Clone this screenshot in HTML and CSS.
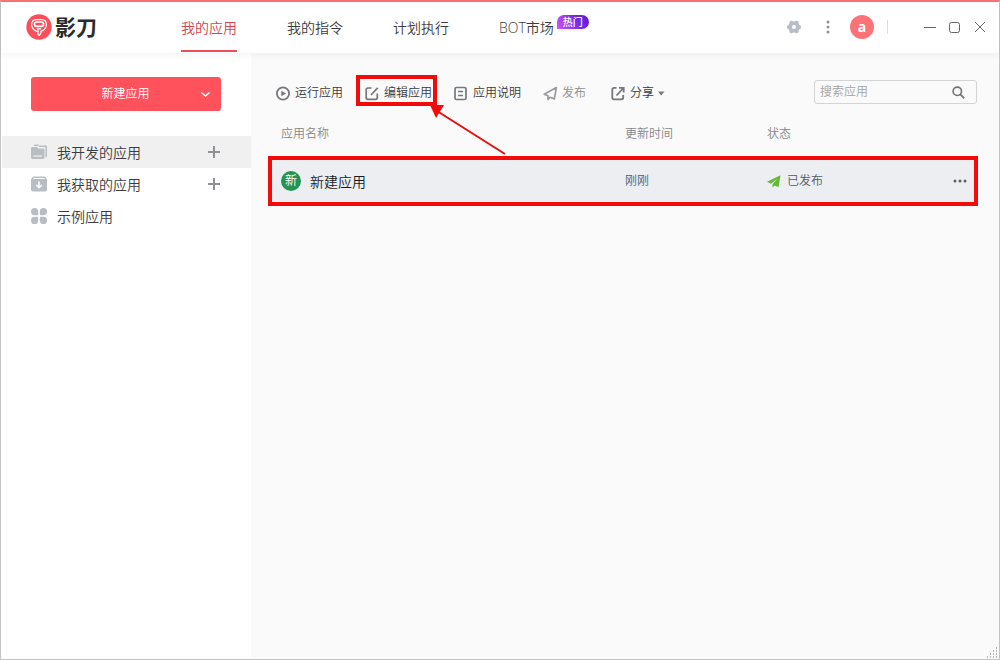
FILE: index.html
```html
<!DOCTYPE html>
<html lang="zh-CN">
<head>
<meta charset="utf-8">
<meta name="viewport" content="width=device-width, initial-scale=1">
<title>影刀</title>
<link rel="stylesheet" href="styles.css">
</head>
<body>
<div class="window">
  <header class="header">
    <div class="brand">
      <svg class="brand-logo" viewBox="0 0 26 26" aria-hidden="true">
        <circle cx="13" cy="13" r="12.7" fill="#fc4f5b"/>
        <g fill="none" stroke="#fff" stroke-linejoin="round" stroke-linecap="round">
          <path stroke-width="1.200" d="M10.800 17.400C8 16.200 5.800 13.800 5.600 10.600 5.500 7.300 7.500 5.700 10.400 5.600h5.200c2.900.1 4.900 1.700 4.800 5-.2 3.200-2.400 5.600-5.200 6.800"/>
          <rect stroke-width="1.700" x="8.500" y="8" width="9" height="4.400" rx="2.100"/>
          <path stroke-width="1.300" d="M11.300 14.800h3.400M12 15.500v4.700l1.200 1.300 1.900-2.800v-1.500"/>
        </g>
      </svg>
      <span class="brand-name">影刀</span>
    </div>
    <nav class="nav">
      <a class="nav-link active" href="#apps">我的应用</a>
      <a class="nav-link" href="#commands">我的指令</a>
      <a class="nav-link" href="#schedule">计划执行</a>
      <a class="nav-link" href="#market">BOT市场<span class="hot">热门</span></a>
    </nav>
    <div class="tools">
      <button class="icon-button" aria-label="设置">
        <svg width="14" height="14" viewBox="0 0 14 14"><path fill="#b9bdc5" fill-rule="evenodd" d="M4.300.6Q7 2.600 9.700.6L11.600 1.700Q11.200 4.700 14 5.800V8.200Q11.200 9.300 11.600 12.300L9.700 13.400Q7 11.400 4.300 13.400L2.400 12.300Q2.800 9.300 0 8.200V5.800Q2.800 4.700 2.400 1.700ZM7 5a2 2 0 1 0 0 4 2 2 0 0 0 0-4z"/></svg>
      </button>
      <button class="icon-button menu" aria-label="更多">
        <svg width="4" height="14" viewBox="0 0 4 14" fill="#8e9197"><circle cx="2" cy="2" r="1.500"/><circle cx="2" cy="7" r="1.500"/><circle cx="2" cy="12" r="1.500"/></svg>
      </button>
      <button class="avatar" aria-label="账号">a</button>
      <span class="divider"></span>
      <button class="icon-button" aria-label="最小化">
        <svg width="12" height="12" viewBox="0 0 12 12"><path d="M0 6.500h12" stroke="#666"/></svg>
      </button>
      <button class="icon-button" aria-label="最大化">
        <svg width="12" height="12" viewBox="0 0 12 12"><rect x=".5" y="1.500" width="10" height="10" rx="2" fill="none" stroke="#666"/></svg>
      </button>
      <button class="icon-button" aria-label="关闭">
        <svg width="12" height="12" viewBox="0 0 12 12"><path d="M1 1l10 10M11 1L1 11" stroke="#666"/></svg>
      </button>
    </div>
  </header>

  <div class="body">
    <aside class="sidebar">
      <button class="create"><span class="create-label">新建应用</span>
        <svg width="11" height="7" viewBox="0 0 11 7"><path d="M1.500 1.500l4 3.600 4-3.600" fill="none" stroke="#fff" stroke-width="1.500"/></svg>
      </button>
      <ul class="folders">
        <li class="folder selected">
          <a class="folder-link" href="#developed">
            <svg width="16" height="16" viewBox="0 0 16 16" fill="#b9bdc4"><path d="M3 2V1.600Q3 .6 4 .6h3l1.300 1H15q1 0 1 1V12q0 1.500-1.500 1.500V4.200q0-1.200-1.200-1.200H8.500L7.500 2z"/><path fill-rule="evenodd" d="M1.500 3H6l1.500 1.400h4.800q1.200 0 1.200 1.200v8q0 1.400-1.400 1.400H1.400Q0 15 0 13.600V4.500Q0 3 1.500 3zM2.500 11.500v1.200H11v-1.200z"/></svg>
            <span class="folder-name">我开发的应用</span></a>
          <button class="add" aria-label="在我开发的应用中新建"></button>
        </li>
        <li class="folder">
          <a class="folder-link" href="#acquired">
            <svg width="16" height="16" viewBox="0 0 16 16"><path fill="#b9bdc4" fill-rule="evenodd" d="M3 .5h10q1 0 1.600.8L16 3.500v10q0 2-2 2H2q-2 0-2-2v-10l1.400-2.200Q2 .5 3 .5zM2 3h12l-.8-1H2.800z"/><path d="M8 5.500v6M5.300 9L8 11.700 10.700 9" fill="none" stroke="#fff" stroke-width="1.600"/></svg>
            <span class="folder-name">我获取的应用</span></a>
          <button class="add" aria-label="在我获取的应用中新建"></button>
        </li>
        <li class="folder">
          <a class="folder-link" href="#examples">
            <svg width="16" height="16" viewBox="0 0 16 16" fill="#b9bdc4"><path d="M3.600 0A3.600 3.600 0 0 1 7.200 3.600V6q0 1.200-1.200 1.200H3.600A3.600 3.600 0 0 1 3.600 0zM12.400 0a3.600 3.600 0 0 1 0 7.200H10Q8.800 7.200 8.800 6V3.600A3.600 3.600 0 0 1 12.400 0zM3.600 8.800H6q1.200 0 1.200 1.200v2.400A3.600 3.600 0 1 1 3.600 8.800zM10 8.800h2.400a3.600 3.600 0 1 1-3.600 3.600V10q0-1.200 1.200-1.200z"/></svg>
            <span class="folder-name">示例应用</span></a>
        </li>
      </ul>
    </aside>

    <main class="main">
      <div class="toolbar">
        <button class="action">
          <svg width="15" height="15" viewBox="0 0 15 15"><circle cx="7" cy="7.500" r="6.100" fill="none" stroke="#75777b" stroke-width="1.800"/><path d="M5.400 4.700v5.600l4.600-2.800z" fill="#75777b"/></svg>
          运行应用</button>
        <button class="action marked">
          <svg width="15" height="15" viewBox="0 0 15 15" fill="none" stroke="#75777b" stroke-width="1.700"><path d="M6.500 2H3Q1.200 2 1.200 3.800v7.700q0 1.800 1.800 1.800h7.500q1.800 0 1.800-1.800V7.500"/><path d="M6 9l6.700-7.200"/></svg>
          编辑应用
          <svg class="arrow" width="80" height="54" viewBox="0 0 80 54" aria-hidden="true"><path d="M8 6l68 43" stroke="#e80d0d" stroke-width="2"/><path d="M1 0L15 0L7 13z" fill="#f30b0b"/></svg>
        </button>
        <button class="action">
          <svg width="15" height="15" viewBox="0 0 15 15" fill="none" stroke="#75777b"><rect x="1" y="1.500" width="11" height="12" rx="1.500" stroke-width="1.700"/><path d="M4 5.500h5M4 9.500h5" stroke-width="1.500"/></svg>
          应用说明</button>
        <button class="action muted">
          <svg width="15" height="15" viewBox="0 0 15 15" fill="none" stroke="#999b9f" stroke-width="1.700" stroke-linejoin="round"><path d="M13.400 1.500L1.200 8.200l3.800 1.600v3.700l2-2.200 4.300 1.600z"/></svg>
          发布</button>
        <button class="action share">
          <svg width="15" height="15" viewBox="0 0 15 15" fill="none" stroke="#75777b" stroke-width="1.800"><path d="M5.500 1.900H3Q1.300 1.900 1.300 3.600v8Q1.300 13.300 3 13.300h7.500q1.700 0 1.700-1.700V9"/><path d="M5.500 9.500L12 2.500M8 1.900h4.700v4.600"/></svg>
          分享
          <svg width="7" height="5" viewBox="0 0 7 5"><path d="M0 .5h6.500L3.300 4.500z" fill="#77797c"/></svg>
        </button>
        <form class="search">
          <input class="search-input" type="text" placeholder="搜索应用" aria-label="搜索应用">
          <button class="icon-button" type="button" aria-label="搜索">
            <svg width="13" height="13" viewBox="0 0 13 13" fill="none" stroke="#707276"><circle cx="5.300" cy="5.300" r="4.200" stroke-width="1.600"/><path d="M8.300 8.300l4 4" stroke-width="1.800"/></svg>
          </button>
        </form>
      </div>

      <table class="apps">
        <thead>
          <tr>
            <th class="col-name">应用名称</th>
            <th class="col-time">更新时间</th>
            <th class="col-status">状态</th>
            <th class="col-more"></th>
          </tr>
        </thead>
        <tbody>
          <tr class="app-row">
            <td class="col-name"><div class="cell"><span class="app-icon">新</span><span class="app-name">新建应用</span></div></td>
            <td>刚刚</td>
            <td><div class="cell status"><svg width="14" height="13" viewBox="0 0 14 13"><path fill="#63b839" d="M13.500.3L0 6.800l4 2L10.500 3.500 5.500 9.200V12.700l2-2.200 4 1.700z"/></svg>已发布</div></td>
            <td class="col-more"><button class="icon-button more" aria-label="更多操作"><svg width="14" height="4" viewBox="0 0 14 4" fill="#5c5f66"><circle cx="2" cy="2" r="1.500"/><circle cx="7" cy="2" r="1.500"/><circle cx="12" cy="2" r="1.500"/></svg></button></td>
          </tr>
        </tbody>
      </table>
      <svg class="grip" width="12" height="12" viewBox="0 0 12 12" fill="#b4b5b8" aria-hidden="true"><path d="M9 0h1v2H9zM9 3h1v2H9zM6 3h1v2H6zM9 6h1v2H9zM6 6h1v2H6zM3 6h1v2H3zM9 9h1v2H9zM6 9h1v2H6zM3 9h1v2H3zM0 9h1v2H0z"/></svg>
    </main>
  </div>
</div>
</body>
</html>
```
FILE: styles.css
```css
* {
  box-sizing: border-box;
}

body {
  margin: 0;
  font-family: "Open Sans", "Noto Sans CJK SC", sans-serif;
  font-size: 12px;
  font-weight: 350;
  line-height: 20px;
  color: #3c3c3e;
}

button,
input {
  font: inherit;
  color: inherit;
}

button {
  padding: 0;
  border: 0;
  background: none;
  cursor: pointer;
}

a {
  color: inherit;
  text-decoration: none;
}

svg {
  display: block;
  flex: none;
}

.window {
  display: flex;
  flex-direction: column;
  min-height: 100vh;
  border: 1px solid #c4c4c6;
  border-top: 2px solid #fb7376;
  background: #fafafa;
}

.header {
  position: relative;
  z-index: 1;
  display: flex;
  height: 51px;
  padding: 0 13px 0 25px;
  background: #fff;
  box-shadow: 0 1px 8px rgba(0, 0, 0, 0.06);
}

.brand {
  display: flex;
  align-items: center;
  gap: 3px;
  width: 155px;
  padding-bottom: 1px;
}

.brand-logo {
  width: 26px;
  height: 26px;
}

.brand-name {
  font-size: 21px;
  font-weight: 700;
  color: #2b2b2d;
}

.nav {
  display: flex;
  gap: 50px;
}

.nav-link {
  position: relative;
  height: 50px;
  border-bottom: 2px solid transparent;
  font-size: 14px;
  line-height: 52px;
  white-space: nowrap;
}

.nav-link.active {
  border-color: #e9505c;
  color: #d7434e;
}

.hot {
  position: absolute;
  left: 100%;
  top: 13px;
  width: 32px;
  margin-left: 3px;
  border-radius: 7px 7px 7px 0;
  background: linear-gradient(60deg, #d254f5, #7a2be6 60%, #5a1cd0);
  color: #fff;
  font-size: 10px;
  font-weight: 500;
  line-height: 14px;
  text-align: center;
}

.tools {
  display: flex;
  align-items: center;
  gap: 13px;
  margin-left: auto;
  padding-bottom: 1px;
}

.icon-button {
  display: grid;
  place-items: center;
}

.menu {
  margin: 0 7px 0 12px;
}

.avatar {
  width: 24px;
  height: 24px;
  border-radius: 50%;
  background: #fb7376;
  color: #fff;
  font-size: 14px;
  font-weight: 700;
  line-height: 24px;
}

.divider {
  width: 1px;
  height: 14px;
  margin-right: 23px;
  background: #dcdcde;
}

.body {
  display: flex;
  flex: 1;
}

.sidebar {
  flex: none;
  width: 250px;
  padding-top: 24px;
  background: #fff;
}

.create {
  display: flex;
  align-items: center;
  width: 190px;
  height: 34px;
  margin: 0 30px 25px;
  padding: 0 10px;
  border-radius: 3px;
  background: #ff525d;
  color: #fff;
}

.create-label {
  flex: 1;
  padding-left: 10px;
}

.folders {
  margin: 0;
  padding: 0;
  list-style: none;
}

.folder {
  display: flex;
  align-items: center;
  justify-content: space-between;
  height: 32px;
  margin: 0 0 0 1px;
  padding: 0 30px 0 29px;
  font-size: 14px;
}

.selected {
  background: #f0f0f0;
}

.folder-link {
  display: flex;
  align-items: center;
  gap: 10px;
}

.folder-name {
  padding-top: 2px;
}

.add {
  width: 14px;
  height: 14px;
  background:
    linear-gradient(#8f9194, #8f9194) center / 12px 2px no-repeat,
    linear-gradient(#8f9194, #8f9194) center / 2px 12px no-repeat;
}

.main {
  position: relative;
  flex: 1;
  padding: 27px 21px 0 17px;
}

.toolbar {
  display: flex;
  align-items: center;
  gap: 22px;
  height: 24px;
  padding: 0 1px 0 8px;
}

.action {
  position: relative;
  display: flex;
  align-items: center;
  gap: 4px;
  padding-top: 2px;
  white-space: nowrap;
}

.muted {
  color: #8d8f92;
}

.share {
  margin-left: 3px;
}

.marked::after {
  content: "";
  position: absolute;
  inset: -6px -5px -3px -9px;
  border: 4px solid #f30b0b;
}

.arrow {
  position: absolute;
  left: 64px;
  top: 24px;
}

.search {
  display: flex;
  align-items: center;
  width: 163px;
  height: 24px;
  margin-left: auto;
  padding: 0 11px 0 5px;
  border: 1px solid #d3d4d6;
  border-radius: 3px;
}

.search-input {
  flex: 1;
  min-width: 0;
  padding: 0;
  border: 0;
  outline: 0;
  background: none;
}

.search-input::placeholder {
  color: #a2a3a5;
}

.apps {
  width: 100%;
  margin-top: 20px;
  border-collapse: collapse;
  table-layout: fixed;
}

.apps th {
  height: 32px;
  padding: 0 0 12px;
  color: #85878a;
  font-weight: inherit;
  text-align: left;
}

.apps td {
  height: 50px;
  padding: 0;
  color: #56585c;
}

.apps .col-name {
  padding-left: 13px;
}

.col-time {
  width: 142px;
}

.col-status {
  width: 180px;
}

.col-more {
  width: 31px;
}

.app-row {
  background: #edeef2;
  outline: 4px solid #f30b0b;
  outline-offset: -4px;
}

.cell {
  display: flex;
  align-items: center;
  gap: 9px;
}

.status {
  gap: 6px;
}

.app-icon {
  width: 20px;
  height: 20px;
  border-radius: 50%;
  background: #259452;
  color: #fff;
  text-align: center;
}

.app-name {
  padding-top: 2px;
  color: #1a1a1c;
  font-size: 14px;
}

.more {
  margin-left: 6px;
}

.grip {
  position: absolute;
  right: 0;
  bottom: 0;
}
```
